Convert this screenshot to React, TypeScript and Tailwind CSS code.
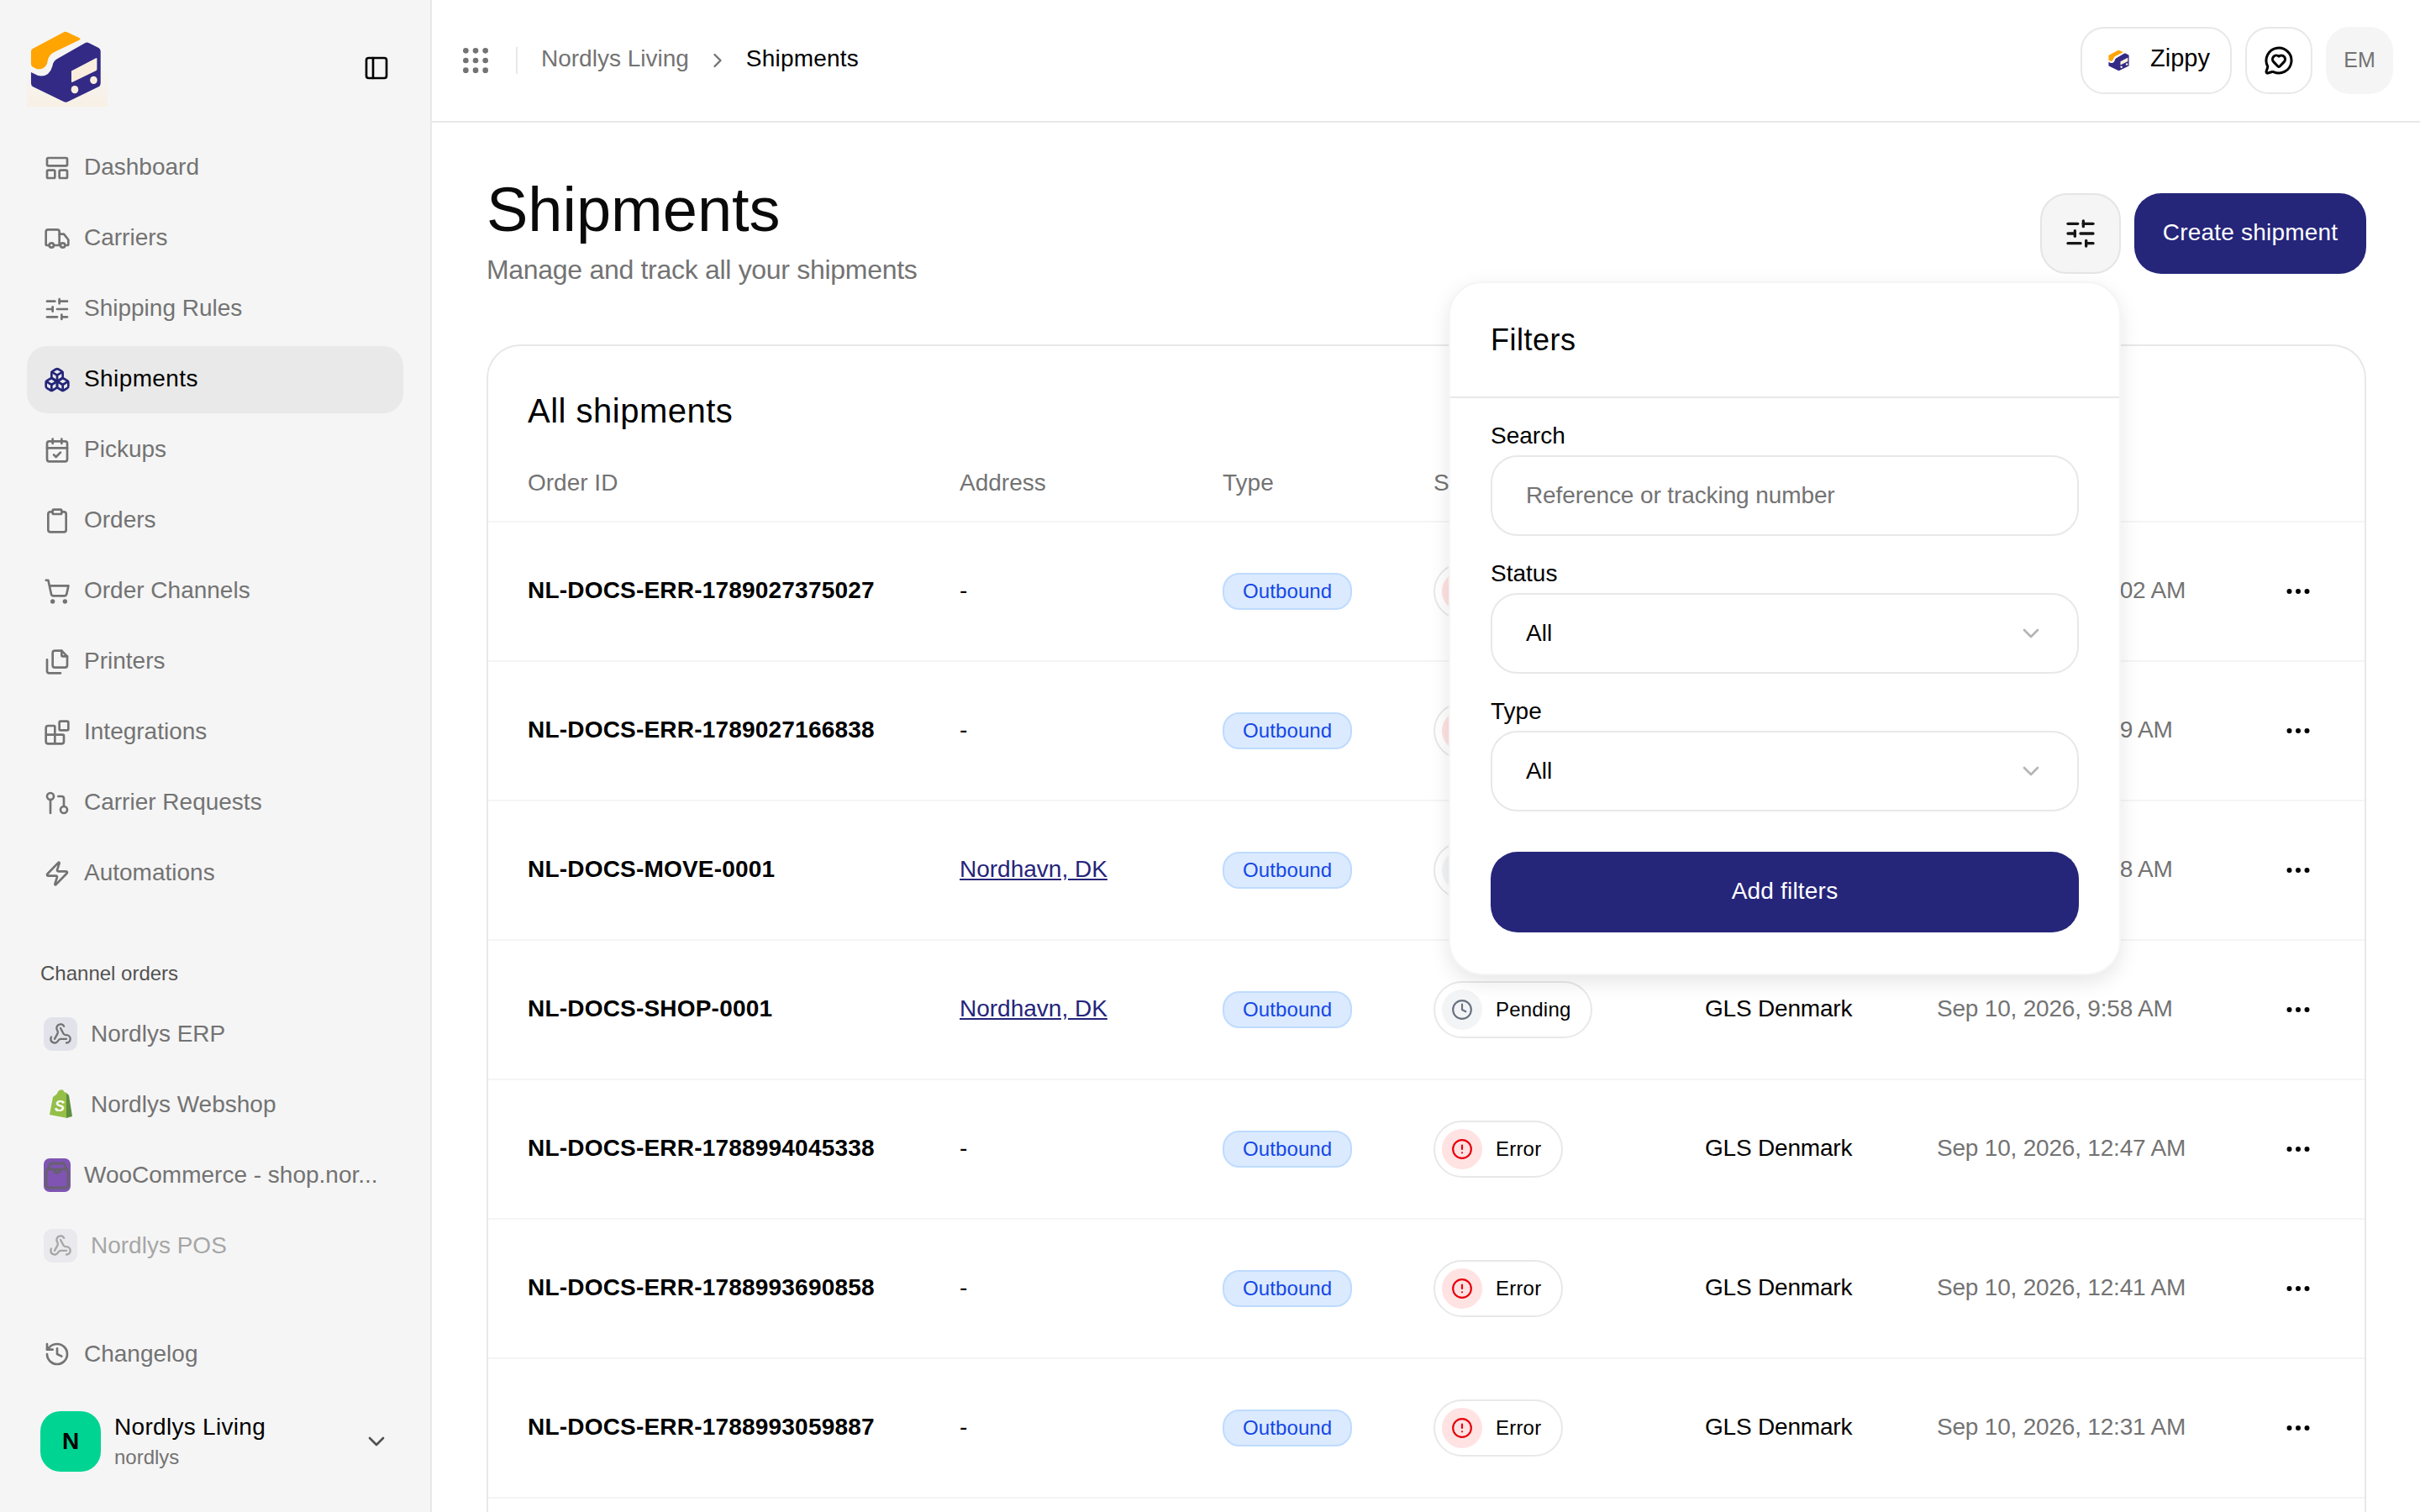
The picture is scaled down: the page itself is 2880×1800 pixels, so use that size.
import {
  Blocks,
  Boxes,
  CalendarCheck,
  ChevronDown,
  ChevronRight,
  CircleAlert,
  Clipboard,
  Clock,
  Ellipsis,
  GitPullRequest,
  Grip,
  History,
  LayoutPanelTop,
  MessageCircleHeart,
  PanelLeft,
  SlidersHorizontal,
  Truck,
  Webhook,
  Zap,
} from "lucide-react"

function CartIcon({ className }: { className?: string }) {
  return (
    <svg viewBox="0 0 24 24" fill="none" stroke="currentColor" strokeWidth="2" strokeLinecap="round" strokeLinejoin="round" className={className}>
      <circle cx="8" cy="21" r="1" />
      <circle cx="19" cy="21" r="1" />
      <path d="M2.05 2.05h2l2.66 12.42a2 2 0 0 0 2 1.58h9.78a2 2 0 0 0 1.95-1.57l1.65-7.43H5.12" />
    </svg>
  )
}

function PagesIcon({ className }: { className?: string }) {
  return (
    <svg viewBox="0 0 24 24" fill="none" stroke="currentColor" strokeWidth="2" strokeLinecap="round" strokeLinejoin="round" className={className}>
      <path d="M10 2h6l5 5v8a2 2 0 0 1-2 2h-9a2 2 0 0 1-2-2V4a2 2 0 0 1 2-2Z" />
      <path d="M16 2v4a1 1 0 0 0 1 1h4" />
      <path d="M3 10v10a2 2 0 0 0 2 2h10" />
    </svg>
  )
}

const navItems = [
  { icon: LayoutPanelTop, label: "Dashboard" },
  { icon: Truck, label: "Carriers" },
  { icon: SlidersHorizontal, label: "Shipping Rules" },
  { icon: Boxes, label: "Shipments", active: true },
  { icon: CalendarCheck, label: "Pickups" },
  { icon: Clipboard, label: "Orders" },
  { icon: CartIcon, label: "Order Channels" },
  { icon: PagesIcon, label: "Printers" },
  { icon: Blocks, label: "Integrations" },
  { icon: GitPullRequest, label: "Carrier Requests" },
  { icon: Zap, label: "Automations" },
]

const shipments = [
  { id: "NL-DOCS-ERR-1789027375027", address: "-", status: "Error", date: "Sep 10, 2026, 10:02 AM" },
  { id: "NL-DOCS-ERR-1789027166838", address: "-", status: "Error", date: "Sep 10, 2026, 9:59 AM" },
  { id: "NL-DOCS-MOVE-0001", address: "Nordhavn, DK", status: "Pending", date: "Sep 10, 2026, 9:58 AM" },
  { id: "NL-DOCS-SHOP-0001", address: "Nordhavn, DK", status: "Pending", date: "Sep 10, 2026, 9:58 AM" },
  { id: "NL-DOCS-ERR-1788994045338", address: "-", status: "Error", date: "Sep 10, 2026, 12:47 AM" },
  { id: "NL-DOCS-ERR-1788993690858", address: "-", status: "Error", date: "Sep 10, 2026, 12:41 AM" },
  { id: "NL-DOCS-ERR-1788993059887", address: "-", status: "Error", date: "Sep 10, 2026, 12:31 AM" },
]

function Logo({ className, glow }: { className: string; glow?: boolean }) {
  return (
    <svg viewBox="40 37 290 285" className={className}>
      <defs>
        <linearGradient id="logo-glow" x1="0" y1="0" x2="0" y2="1">
          <stop offset="0.5" stopColor="#f5f5f5" />
          <stop offset="1" stopColor="#f8f0e4" />
        </linearGradient>
      </defs>
      {glow && <rect x="40" y="37" width="290" height="285" fill="url(#logo-glow)" />}
      <path
        d="M62 112 L170 55 Q178 50 186 54 L228 74 Q236 78 228 82 L140 124 Q118 135 115 155 Q112 180 90 186 Q80 188 70 183 L60 178 Q55 174 55 168 L55 122 Q55 116 62 112 Z"
        fill="#ffa400"
      />
      <path
        d="M250 92 Q256 89 262 92 L298 110 Q305 114 305 122 L305 238 Q305 246 298 250 L186 304 Q180 307 174 304 L62 250 Q55 246 55 238 L55 198 L80 210 Q120 218 132 175 Q134 158 148 150 Z"
        fill="#322a85"
      />
      <path
        d="M200 193 L288 147 Q292 145 292 150 L292 186 Q292 190 288 192 L204 233 Q200 235 200 230 Z"
        fill="#f9eedd"
      />
      <ellipse cx="212" cy="260" rx="13" ry="14" fill="#f9eedd" />
      <ellipse cx="280" cy="226" rx="13" ry="14" fill="#f9eedd" />
    </svg>
  )
}

function ShopifyBag() {
  return (
    <svg viewBox="0 0 40 40" className="w-10 h-10">
      <path d="M7 32 L11 11 Q17 7 20 3 L27 6 L28 36 Z" fill="#95bf47" />
      <path d="M27 6 L30 9 L34 34 L27 36 Z" fill="#5e8e3e" />
      <path d="M16 10 Q17 3 21 3 Q24 3 24 8" fill="none" stroke="#95bf47" strokeWidth="1.5" />
      <text x="13" y="28" fontSize="18" fontWeight="700" fontStyle="italic" fill="#ffffff" fontFamily="Liberation Sans, sans-serif">
        S
      </text>
    </svg>
  )
}

function WooIcon() {
  return (
    <div className="flex h-10 w-8 items-center justify-center rounded-[7px] bg-[#7f54b3]">
      <svg viewBox="0 0 32 40" className="h-10 w-8" fill="none" stroke="#67606f" strokeWidth="3" strokeLinejoin="round">
        <path d="M5 13 L8 6 H24 L27 13" />
        <rect x="3" y="13" width="26" height="22" rx="3" />
        <path d="M12 14 Q16 21 20 14" />
      </svg>
    </div>
  )
}

function Sidebar() {
  return (
    <aside className="flex w-[514px] shrink-0 flex-col border-r-2 border-[#e8e8e8] bg-[#f5f5f5] px-8 pb-12">
      <div className="flex h-[160px] items-start justify-between pt-8">
        <Logo className="h-24 w-24" glow />
        <PanelLeft className="mt-[33px] mr-4 h-8 w-8 text-black" />
      </div>

      <nav className="flex flex-col gap-1">
        {navItems.map((item) => {
          const Icon = item.icon
          return (
            <a
              key={item.label}
              className={
                item.active
                  ? "flex h-20 items-center gap-4 rounded-[24px] bg-[#e9e9e9] px-5 text-[28px] tracking-[0.4px] text-black"
                  : "flex h-20 items-center gap-4 rounded-[24px] px-5 text-[28px] text-[#737373]"
              }
            >
              <Icon className={item.active ? "h-8 w-8 text-[#25257a]" : "h-8 w-8"} />
              <span className="mb-0.5">{item.label}</span>
            </a>
          )
        })}
      </nav>

      <div className="mt-[63px] mb-4 h-8 px-4 text-[24px] leading-8 text-[#525252]">Channel orders</div>
      <div className="flex flex-col gap-1 text-[28px] text-[#737373]">
        <a className="flex h-20 items-center gap-4 px-5">
          <span className="flex h-10 w-10 items-center justify-center rounded-[10px] bg-[#e2e2ea]">
            <Webhook className="h-7 w-7" />
          </span>
          Nordlys ERP
        </a>
        <a className="flex h-20 items-center gap-4 px-5">
          <ShopifyBag />
          Nordlys Webshop
        </a>
        <a className="flex h-20 items-center gap-4 px-5">
          <WooIcon />
          WooCommerce - shop.nor...
        </a>
        <a className="flex h-20 items-center gap-4 px-5 opacity-60">
          <span className="flex h-10 w-10 items-center justify-center rounded-[10px] bg-[#e2e2ea]">
            <Webhook className="h-7 w-7" />
          </span>
          Nordlys POS
        </a>
      </div>

      <div className="mt-auto flex flex-col gap-[28px]">
        <a className="flex h-20 items-center gap-4 px-5 text-[28px] text-[#737373]">
          <History className="h-8 w-8" />
          Changelog
        </a>
        <div className="flex items-center gap-4 pl-4 pr-4">
          <div className="flex h-[72px] w-[72px] items-center justify-center rounded-[24px] bg-[#00d492] text-[28px] font-bold text-black">
            N
          </div>
          <div className="flex-1">
            <div className="text-[28px] leading-9 tracking-[0.3px] text-black">Nordlys Living</div>
            <div className="mt-0.5 text-[24px] leading-8 text-[#737373]">nordlys</div>
          </div>
          <ChevronDown className="h-8 w-8 text-[#525252]" />
        </div>
      </div>
    </aside>
  )
}

function TopBar() {
  return (
    <header className="flex h-[146px] shrink-0 items-center justify-between border-b-2 border-[#e8e8e8] pr-8 pl-8">
      <div className="flex items-center text-[28px]">
        <Grip className="h-10 w-10 text-[#737373]" />
        <div className="ml-7 h-8 w-0.5 bg-[#e8e8e8]" />
        <span className="mb-1 ml-7 text-[#737373]">Nordlys Living</span>
        <ChevronRight className="ml-5 h-7 w-7 text-[#737373]" />
        <span className="mb-1 ml-5 tracking-[0.2px] text-black">Shipments</span>
      </div>
      <div className="flex items-center gap-4">
        <button className="flex h-20 w-[180px] items-center gap-[23px] rounded-[28px] border-2 border-[#e8e8e8] pl-[30px] text-[29px] text-black">
          <Logo className="h-7 w-7" />
          <span className="mb-1">Zippy</span>
        </button>
        <button className="flex h-20 w-20 items-center justify-center rounded-[28px] border-2 border-[#e8e8e8]">
          <MessageCircleHeart className="h-9 w-9 text-black" />
        </button>
        <div className="flex h-20 w-20 items-center justify-center rounded-[28px] bg-[#f5f5f5] text-[25px] text-[#737373]">
          EM
        </div>
      </div>
    </header>
  )
}

function StatusChip({ status }: { status: string }) {
  const isError = status === "Error"
  return (
    <div className="flex h-[68px] w-fit items-center gap-4 rounded-[34px] border-2 border-[#e8e8e8] bg-white pr-6 pl-2 text-[24px] tracking-[0.2px] text-black">
      <span
        className={
          isError
            ? "flex h-12 w-12 items-center justify-center rounded-full bg-[#ffe2e2]"
            : "flex h-12 w-12 items-center justify-center rounded-full bg-[#f3f4f6]"
        }
      >
        {isError ? (
          <CircleAlert className="h-[26px] w-[26px] text-[#e7000b]" />
        ) : (
          <Clock className="h-[26px] w-[26px] text-[#6a7282]" />
        )}
      </span>
      {status}
    </div>
  )
}

function ShipmentsTable() {
  return (
    <div className="mt-[69px] min-h-[1500px] rounded-t-[40px] border-2 border-b-0 border-[#e8e8e8]">
      <h2 className="px-[47px] pt-[53px] text-[40px] leading-[48px] tracking-[0.5px] text-black">All shipments</h2>
      <div className="mt-[42px] grid grid-cols-[514px_313px_251px_323px_276px_1fr_64px] border-b-2 border-[#f5f5f5] px-[47px] pb-[25px] text-[28px] leading-10 text-[#737373]">
        <div>Order ID</div>
        <div>Address</div>
        <div>Type</div>
        <div>Status</div>
        <div>Carrier</div>
        <div>Created</div>
        <div />
      </div>
      {shipments.map((s) => (
        <div
          key={s.id}
          className="grid h-[166px] grid-cols-[514px_313px_251px_323px_276px_1fr_64px] items-center border-b-2 border-[#f5f5f5] px-[47px] text-[28px]"
        >
          <div className="mb-0.5 font-bold tracking-[0.2px] text-black">{s.id}</div>
          <div className="mb-0.5">
            {s.address === "-" ? (
              <span className="text-black">-</span>
            ) : (
              <a className="text-[#25257a] underline">{s.address}</a>
            )}
          </div>
          <div>
            <span className="inline-flex h-11 items-center rounded-[20px] border-2 border-[#bedbff] bg-[#dbeafe] px-[22px] text-[24px] tracking-[0.1px] text-[#1447e6]">
              Outbound
            </span>
          </div>
          <StatusChip status={s.status} />
          <div className="mb-0.5 tracking-[-0.2px] text-black">GLS Denmark</div>
          <div className="mb-0.5 tracking-[-0.2px] text-[#737373]">{s.date}</div>
          <div className="flex justify-center">
            <Ellipsis className="h-9 w-9 text-black" />
          </div>
        </div>
      ))}
    </div>
  )
}

function FilterSelect({ label }: { label: string }) {
  return (
    <div className="flex flex-col gap-1">
      <label className="h-10 pt-0.5 text-[28px] leading-[38px] text-black">{label}</label>
      <div className="flex h-24 items-center justify-between rounded-[32px] border-2 border-[#e8e8e8] pr-[39px] pl-10 text-[28px] text-black">
        All
        <ChevronDown className="h-8 w-8 text-[#b5b5b5]" />
      </div>
    </div>
  )
}

function FiltersPopover() {
  return (
    <div className="absolute top-[335px] right-[356px] w-[800px] rounded-[40px] border-2 border-[#f5f5f5] bg-white shadow-[0_8px_24px_rgba(0,0,0,0.1)]">
      <div className="flex h-[137px] items-center border-b-2 border-[#e8e8e8] px-12 text-[36px] tracking-[0.5px] text-black">Filters</div>
      <div className="flex flex-col gap-6 px-12 pt-6 pb-[49px]">
        <div className="flex flex-col gap-1">
          <label className="h-10 pt-0.5 text-[28px] leading-[38px] text-black">Search</label>
          <input
            placeholder="Reference or tracking number"
            className="h-24 rounded-[32px] border-2 border-[#e8e8e8] px-10 text-[28px] tracking-[-0.1px] outline-none placeholder:text-[#737373]"
          />
        </div>
        <FilterSelect label="Status" />
        <FilterSelect label="Type" />
        <button className="mt-6 h-24 rounded-[32px] bg-[#25257a] pb-0.5 text-[28px] tracking-[0.2px] text-white">Add filters</button>
      </div>
    </div>
  )
}

export default function App() {
  return (
    <div className="flex h-screen w-full overflow-hidden bg-white font-['Liberation_Sans',sans-serif] antialiased">
      <Sidebar />
      <main className="relative flex min-w-0 flex-1 flex-col overflow-hidden">
        <TopBar />
        <div className="px-[65px] pt-16 pr-16">
          <div className="flex items-start justify-between">
            <div>
              <h1 className="text-[74px] leading-20 text-[#0a0a0a]">Shipments</h1>
              <p className="mt-[11px] text-[32px] leading-10 tracking-[-0.3px] text-[#737373]">Manage and track all your shipments</p>
            </div>
            <div className="mt-5 flex gap-4">
              <button className="flex h-24 w-24 items-center justify-center rounded-[32px] border-2 border-[#e5e5e5] bg-[#f5f5f5]">
                <SlidersHorizontal className="h-10 w-10 text-[#171717]" />
              </button>
              <button className="h-24 w-[276px] rounded-[32px] bg-[#25257a] pb-0.5 text-[28px] tracking-[0.2px] text-white">Create shipment</button>
            </div>
          </div>
          <ShipmentsTable />
        </div>
        <FiltersPopover />
      </main>
    </div>
  )
}
